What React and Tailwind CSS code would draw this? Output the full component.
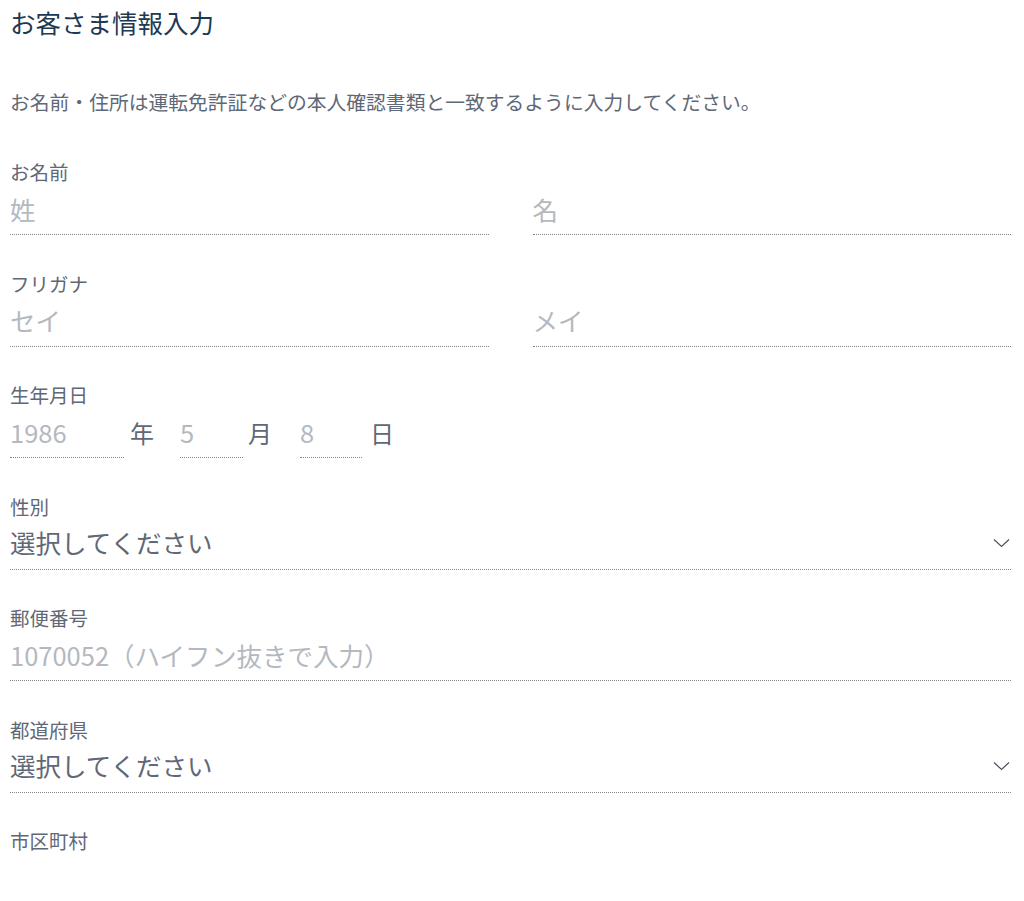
const font = { fontFamily: '"Noto Sans CJK JP", "Noto Sans", sans-serif' };

function Label({ children }) {
  return <div className="h-[24px] text-[19.5px] leading-[24px] text-[#5f6876]">{children}</div>;
}

function TextField({ placeholder, className = "" }) {
  return (
    <div className={`h-[51px] border-b border-dotted border-[#858585] ${className}`}>
      <input
        placeholder={placeholder}
        className="w-full h-[48px] bg-transparent outline-none text-[25.5px] text-[#5f6876] placeholder:text-[#b4b9bf]"
        style={font}
      />
    </div>
  );
}

function Chevron() {
  return (
    <svg width="17" height="10" viewBox="0 0 17 10" fill="none" className="mr-[1px] mt-[1px]">
      <polyline points="1,1.5 8.5,8.5 16,1.5" stroke="#4b5360" strokeWidth="1.2" />
    </svg>
  );
}

function SelectField() {
  return (
    <div className="flex items-center justify-between h-[51px] pb-[3px] border-b border-dotted border-[#858585]">
      <span className="text-[25.5px] text-[#5f6876]">選択してください</span>
      <Chevron />
    </div>
  );
}

function Section({ label, children }) {
  return (
    <div className="mb-[36.5px]">
      <Label>{label}</Label>
      {children}
    </div>
  );
}

export default function App() {
  return (
    <div className="bg-white min-h-[901px] px-[10px] pr-[13px] overflow-hidden" style={font}>
      <h1 className="pt-[6px] h-[38px] text-[25.5px] leading-[32px] text-[#1d3a52]">お客さま情報入力</h1>

      <p className="mt-[52px] text-[19.8px] leading-[24px] text-[#5f6876]">
        お名前・住所は運転免許証などの本人確認書類と一致するように入力してください。
      </p>

      <div className="mt-[46px]">
        <Section label="お名前">
          <div className="flex gap-[44px]">
            <TextField placeholder="姓" className="flex-1" />
            <TextField placeholder="名" className="flex-1" />
          </div>
        </Section>

        <Section label="フリガナ">
          <div className="flex gap-[44px]">
            <TextField placeholder="セイ" className="flex-1" />
            <TextField placeholder="メイ" className="flex-1" />
          </div>
        </Section>

        <Section label="生年月日">
          <div className="flex items-center">
            <TextField placeholder="1986" className="w-[114px]" />
            <span className="ml-[6px] w-[50px] text-[24px] text-[#5f6876]">年</span>
            <TextField placeholder="5" className="w-[63px]" />
            <span className="ml-[5px] w-[52px] text-[24px] text-[#5f6876]">月</span>
            <TextField placeholder="8" className="w-[62px]" />
            <span className="ml-[8px] text-[24px] text-[#5f6876]">日</span>
          </div>
        </Section>

        <Section label="性別">
          <SelectField />
        </Section>

        <Section label="郵便番号">
          <TextField placeholder="1070052（ハイフン抜きで入力）" />
        </Section>

        <Section label="都道府県">
          <SelectField />
        </Section>

        <Section label="市区町村">
          <TextField placeholder="" className="border-transparent" />
        </Section>
      </div>
    </div>
  );
}
